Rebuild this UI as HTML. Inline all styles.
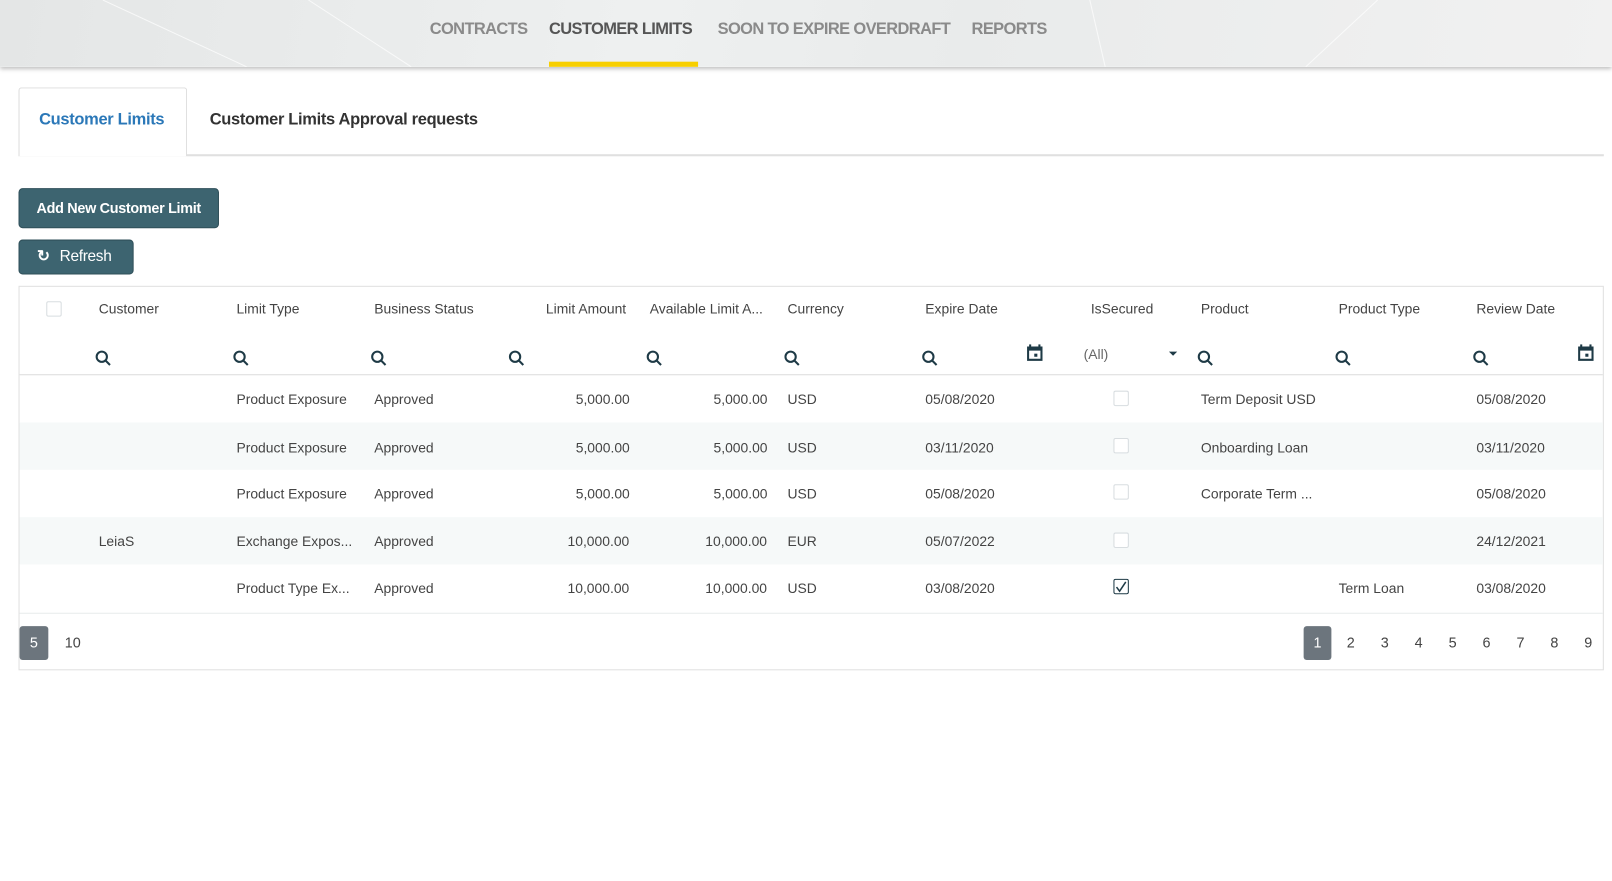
<!DOCTYPE html>
<html><head><meta charset="utf-8"><style>
*{box-sizing:border-box;margin:0;padding:0}
html,body{width:1612px;height:881px;overflow:hidden;background:#fff}
#w{width:1568px;height:857px;transform:scale(1.0281);transform-origin:0 0;position:relative;font-family:"Liberation Sans",sans-serif;color:#444}
.a{position:absolute;white-space:nowrap}
#hdr{position:absolute;left:0;top:0;width:1568px;height:65px;background:linear-gradient(100deg,#e4e6e6 0%,#eef0f0 40%,#e9ebeb 60%,#f1f1f1 100%);box-shadow:0 2px 4px rgba(0,0,0,.25)}
.nav{top:20px;font-size:16px;font-weight:bold;color:#8a8a8a;letter-spacing:-.6px}
.btn{background:#3d6470;color:#fff;border-radius:4px;font-weight:bold;font-size:14px;border:1px solid #2f4f59;letter-spacing:-.3px}
.t{font-size:13.5px;color:#444}
.h{top:293px;font-size:13.5px;color:#444}
.row{position:absolute;left:19px;width:1540px;height:46px}
.cb{position:absolute;width:15px;height:15px;border:1px solid #d8dde0;border-radius:2px;background:#fff}
.pg{top:617px;font-size:14px;color:#444}
</style></head><body><div id="w">
<div id="hdr">
<svg width="1568" height="65" style="position:absolute;left:0;top:0"><g stroke="#fff" stroke-width="1" opacity=".7"><line x1="100" y1="0" x2="240" y2="65"/><line x1="300" y1="0" x2="400" y2="65"/><line x1="1340" y1="0" x2="1270" y2="65"/><line x1="1060" y1="0" x2="1075" y2="65"/></g></svg>
<div class="a nav" style="left:418px">CONTRACTS</div>
<div class="a nav" style="left:534px;color:#555">CUSTOMER LIMITS</div>
<div class="a nav" style="left:698px">SOON TO EXPIRE OVERDRAFT</div>
<div class="a nav" style="left:945px">REPORTS</div>
<div class="a" style="left:534px;top:60px;width:145px;height:5px;background:#f7cf00"></div>
</div>
<div class="a" style="left:18px;top:150px;width:1542px;height:2px;background:#e0e0e0"></div>
<div class="a" style="left:18px;top:85px;width:164px;height:67px;border:1px solid #ddd;border-bottom:none;background:#fff;border-radius:3px 3px 0 0"></div>
<div class="a" style="left:38px;top:108px;font-size:16px;font-weight:bold;color:#2b78b8;letter-spacing:-.3px">Customer Limits</div>
<div class="a" style="left:204px;top:108px;font-size:16px;font-weight:bold;color:#333;letter-spacing:-.3px">Customer Limits Approval requests</div>
<div class="a btn" style="left:18px;top:183px;width:195px;height:39px;line-height:37px;text-align:center">Add New Customer Limit</div>
<div class="a btn" style="left:18px;top:233px;width:112px;height:34px;line-height:32px;font-weight:normal;font-size:15px"><span style="position:absolute;left:17px;font-weight:bold">&#x21bb;</span><span style="position:absolute;left:39px">Refresh</span></div>
<div class="a" style="left:18px;top:278px;width:1542px;height:374px;border:1px solid #e0e0e0"></div>
<div class="cb" style="left:45px;top:293px"></div>
<div class="a h" style="left:96px">Customer</div>
<div class="a h" style="left:230px">Limit Type</div>
<div class="a h" style="left:364px">Business Status</div>
<div class="a h" style="left:531px">Limit Amount</div>
<div class="a h" style="left:632px">Available Limit A...</div>
<div class="a h" style="left:766px">Currency</div>
<div class="a h" style="left:900px">Expire Date</div>
<div class="a h" style="left:1061px">IsSecured</div>
<div class="a h" style="left:1168px">Product</div>
<div class="a h" style="left:1302px">Product Type</div>
<div class="a h" style="left:1436px">Review Date</div>
<svg width="1568" height="30" style="position:absolute;left:0;top:333px">
<g fill="none" stroke="#1e3a46" stroke-width="2">
<circle cx="99" cy="14" r="5"/><circle cx="233" cy="14" r="5"/><circle cx="367" cy="14" r="5"/><circle cx="501" cy="14" r="5"/><circle cx="635" cy="14" r="5"/><circle cx="769" cy="14" r="5"/><circle cx="903" cy="14" r="5"/><circle cx="1171" cy="14" r="5"/><circle cx="1305" cy="14" r="5"/><circle cx="1439" cy="14" r="5"/>
<path d="M103 18l4 4M237 18l4 4M371 18l4 4M505 18l4 4M639 18l4 4M773 18l4 4M907 18l4 4M1175 18l4 4M1309 18l4 4M1443 18l4 4"/>
</g>
<g fill="#1e3a46"><path d="M999 4h15v14h-15zM1001 8h11v8h-11z" fill-rule="evenodd"/><rect x="1001" y="2" width="2" height="3"/><rect x="1010" y="2" width="2" height="3"/><rect x="1006" y="11" width="3" height="3"/>
<path d="M1535 4h15v14h-15zM1537 8h11v8h-11z" fill-rule="evenodd"/><rect x="1537" y="2" width="2" height="3"/><rect x="1546" y="2" width="2" height="3"/><rect x="1542" y="11" width="3" height="3"/>
<path d="M1137 9h8l-4 4z"/></g></svg>
<div class="a t" style="left:1054px;top:337px;color:#666">(All)</div>
<div class="a" style="left:19px;top:364px;width:1540px;height:1px;background:#ddd"></div>
<div class="row" style="top:365px"></div>
<div class="row" style="top:411px;background:#f6f9f9"></div>
<div class="row" style="top:503px;background:#f6f9f9"></div>
<div class="a" style="left:19px;top:596px;width:1540px;height:1px;background:#e8ecec"></div>
<div class="a t" style="left:230px;top:381px">Product Exposure</div><div class="a t" style="left:364px;top:381px">Approved</div><div class="a t" style="left:560px;top:381px">5,000.00</div><div class="a t" style="left:694px;top:381px">5,000.00</div><div class="a t" style="left:766px;top:381px">USD</div><div class="a t" style="left:900px;top:381px">05/08/2020</div><div class="cb" style="left:1083px;top:380px"></div><div class="a t" style="left:1168px;top:381px">Term Deposit USD</div><div class="a t" style="left:1436px;top:381px">05/08/2020</div>
<div class="a t" style="left:230px;top:428px">Product Exposure</div><div class="a t" style="left:364px;top:428px">Approved</div><div class="a t" style="left:560px;top:428px">5,000.00</div><div class="a t" style="left:694px;top:428px">5,000.00</div><div class="a t" style="left:766px;top:428px">USD</div><div class="a t" style="left:900px;top:428px">03/11/2020</div><div class="cb" style="left:1083px;top:426px"></div><div class="a t" style="left:1168px;top:428px">Onboarding Loan</div><div class="a t" style="left:1436px;top:428px">03/11/2020</div>
<div class="a t" style="left:230px;top:473px">Product Exposure</div><div class="a t" style="left:364px;top:473px">Approved</div><div class="a t" style="left:560px;top:473px">5,000.00</div><div class="a t" style="left:694px;top:473px">5,000.00</div><div class="a t" style="left:766px;top:473px">USD</div><div class="a t" style="left:900px;top:473px">05/08/2020</div><div class="cb" style="left:1083px;top:471px"></div><div class="a t" style="left:1168px;top:473px">Corporate Term ...</div><div class="a t" style="left:1436px;top:473px">05/08/2020</div>
<div class="a t" style="left:96px;top:519px">LeiaS</div><div class="a t" style="left:230px;top:519px">Exchange Expos...</div><div class="a t" style="left:364px;top:519px">Approved</div><div class="a t" style="left:552px;top:519px">10,000.00</div><div class="a t" style="left:686px;top:519px">10,000.00</div><div class="a t" style="left:766px;top:519px">EUR</div><div class="a t" style="left:900px;top:519px">05/07/2022</div><div class="cb" style="left:1083px;top:518px"></div><div class="a t" style="left:1436px;top:519px">24/12/2021</div>
<div class="a t" style="left:230px;top:565px">Product Type Ex...</div><div class="a t" style="left:364px;top:565px">Approved</div><div class="a t" style="left:552px;top:565px">10,000.00</div><div class="a t" style="left:686px;top:565px">10,000.00</div><div class="a t" style="left:766px;top:565px">USD</div><div class="a t" style="left:900px;top:565px">03/08/2020</div><div class="cb" style="left:1083px;top:563px;border-color:#1e3a46"><svg width="13" height="13" style="position:absolute;left:0;top:0"><path d="M2 7l3 4 6-9" fill="none" stroke="#1e3a46" stroke-width="1.5"/></svg></div><div class="a t" style="left:1302px;top:565px">Term Loan</div><div class="a t" style="left:1436px;top:565px">03/08/2020</div>
<div class="a" style="left:19px;top:609px;width:28px;height:33px;background:#6c757d;border-radius:3px;color:#fff;font-size:14px;text-align:center;line-height:33px">5</div>
<div class="a pg" style="left:63px">10</div>
<div class="a" style="left:1268px;top:609px;width:27px;height:33px;background:#6c757d;border-radius:3px;color:#fff;font-size:14px;text-align:center;line-height:33px">1</div>
<div class="a pg" style="left:1310px">2</div><div class="a pg" style="left:1343px">3</div><div class="a pg" style="left:1376px">4</div><div class="a pg" style="left:1409px">5</div><div class="a pg" style="left:1442px">6</div><div class="a pg" style="left:1475px">7</div><div class="a pg" style="left:1508px">8</div><div class="a pg" style="left:1541px">9</div>
</div></body></html>
